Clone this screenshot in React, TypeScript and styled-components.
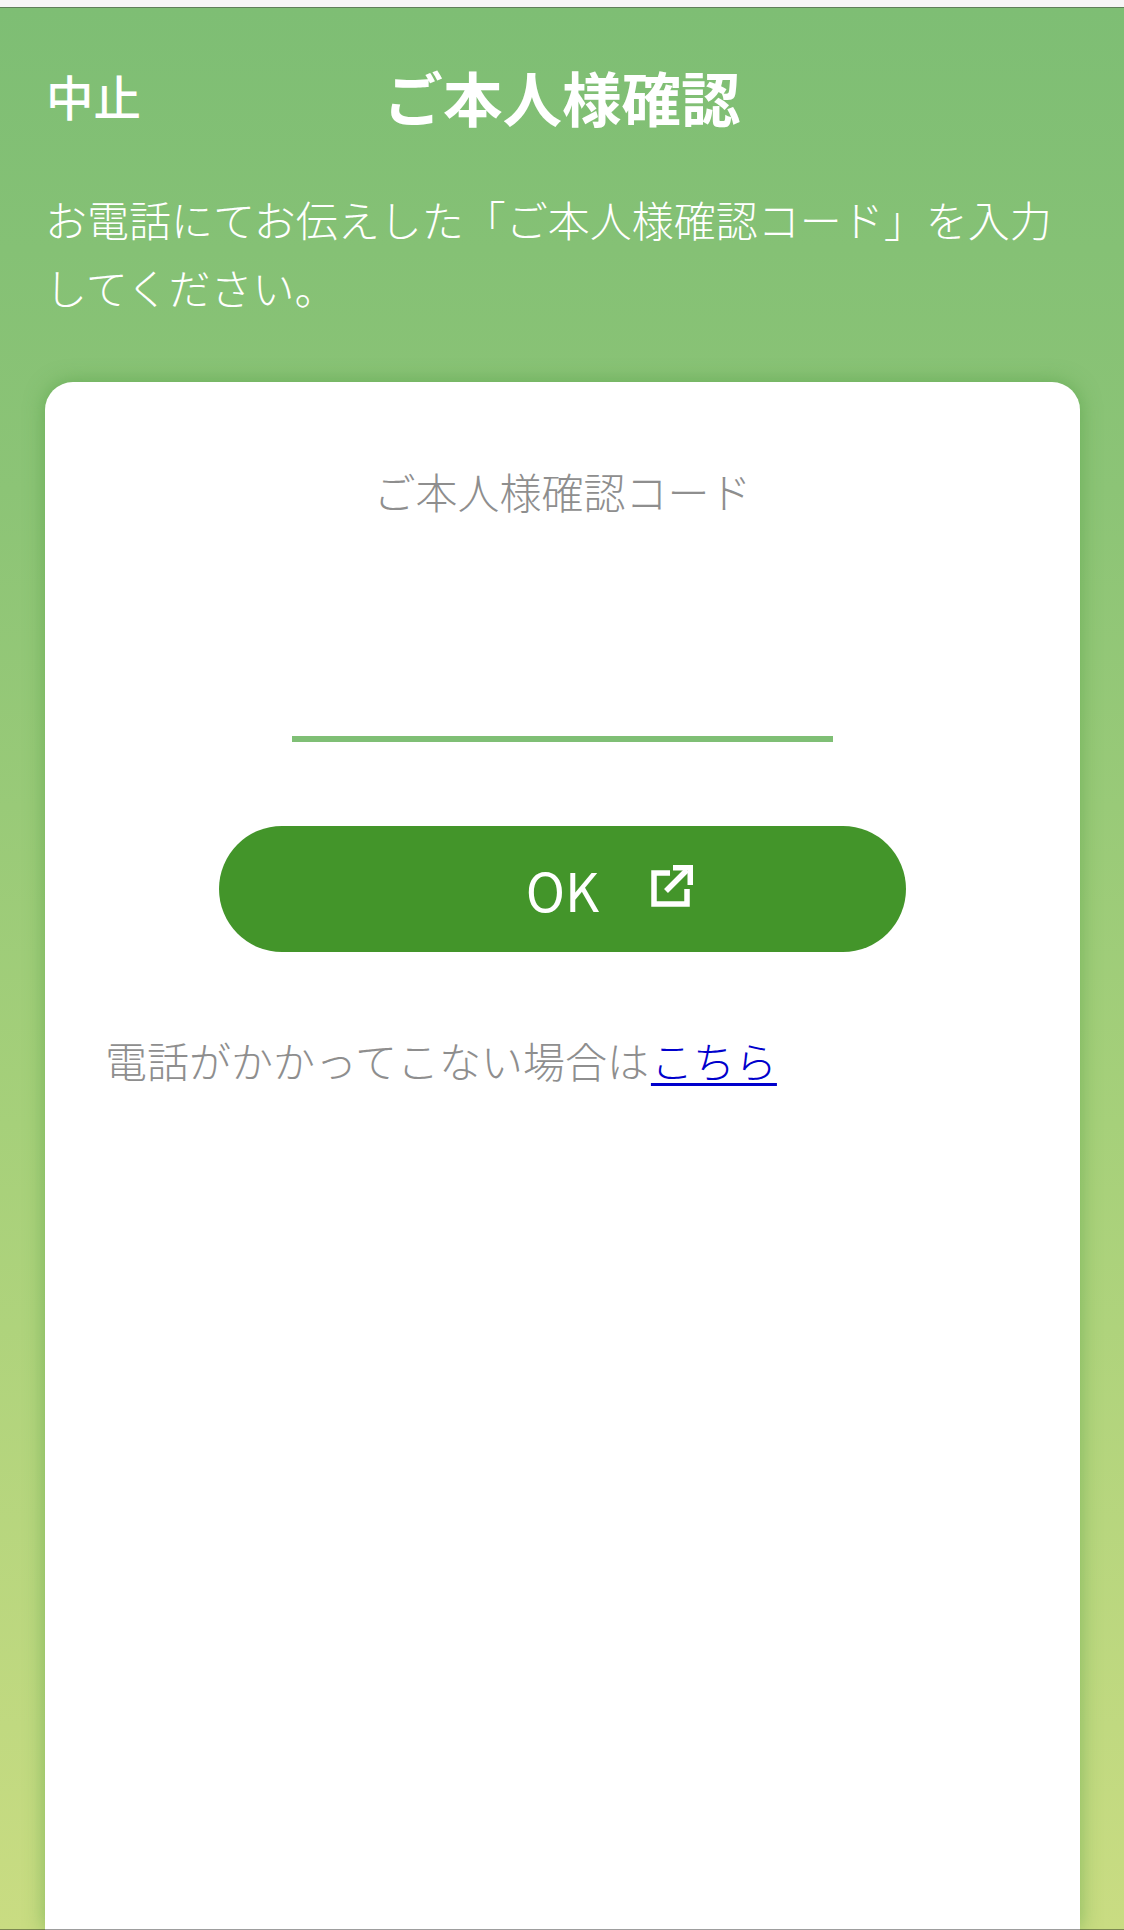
import styled, { createGlobalStyle } from "styled-components";

const GlobalStyle = createGlobalStyle`
  html, body {
    margin: 0;
    padding: 0;
    background: #ffffff;
  }
  * {
    box-sizing: border-box;
  }
`;

const Page = styled.div`
  position: relative;
  width: 1124px;
  height: 1930px;
  display: flex;
  flex-direction: column;
  overflow: hidden;
  font-family: "Noto Sans CJK JP", "Noto Sans", sans-serif;
  font-weight: 300;
`;

const TopStrip = styled.div`
  height: 8px;
  flex: none;
  background: #f6f6f6;
  border-bottom: 1px solid #5f7f5a;
`;

const BottomLine = styled.div`
  position: absolute;
  left: 0;
  right: 0;
  bottom: 0;
  height: 1px;
  background: rgba(0, 0, 0, 0.38);
`;

const Screen = styled.main`
  flex: 1;
  min-height: 0;
  display: flex;
  flex-direction: column;
  background: linear-gradient(180deg, #7ebe74 0%, #8cc476 25%, #a6d07a 58%, #c9dc82 100%);
`;

const Header = styled.header`
  display: grid;
  grid-template-columns: 1fr auto 1fr;
  align-items: center;
  height: 60px;
  margin-top: 58px;
  padding: 0 46px;
  color: #ffffff;
`;

const CancelButton = styled.span`
  font-size: 47.5px;
  font-weight: 500;
  line-height: 60px;
`;

const Title = styled.h1`
  margin: 0;
  font-size: 59.5px;
  font-weight: 700;
  line-height: 60px;
`;

const Lead = styled.p`
  margin: 59px 0 0;
  padding: 0 45px;
  color: #ffffff;
  font-size: 42px;
  line-height: 68px;
`;

const Card = styled.section`
  flex: 1;
  min-height: 0;
  margin: 61px 44px 0 45px;
  display: flex;
  flex-direction: column;
  background: #ffffff;
  border-radius: 28px 28px 0 0;
  box-shadow: 0 0 20px rgba(70, 150, 55, 0.5);
`;

const FieldLabel = styled.div`
  margin-top: 81px;
  color: #8e8e8e;
  font-size: 42px;
  line-height: 56px;
  text-align: center;
`;

const CodeInput = styled.div`
  width: 541px;
  height: 6px;
  margin: 217px auto 0;
  background: #7fbf75;
`;

const OkButton = styled.button`
  width: 687px;
  height: 126px;
  margin: 84px 0 0 174px;
  padding: 0;
  display: grid;
  grid-template-columns: 1fr auto 1fr;
  align-items: center;
  border: none;
  border-radius: 63px;
  background: #43952a;
  color: #ffffff;
  font-family: inherit;
  font-size: 53px;
  font-weight: 400;
`;

const ExternalIcon = styled.svg`
  width: 42px;
  height: 42px;
  margin-left: 52px;
  margin-top: -6px;
`;

const HelpText = styled.p`
  margin: 78px 0 0;
  padding-left: 60px;
  color: #8e8e8e;
  font-size: 42px;
  line-height: 60px;
`;

const HelpLink = styled.a`
  margin-left: 2px;
  color: #0000cc;
  text-decoration: underline;
  text-underline-offset: 5px;
  text-decoration-thickness: 3px;
`;

function App() {
  return (
    <Page>
      <GlobalStyle />
      <TopStrip />
      <Screen>
        <Header>
          <CancelButton>中止</CancelButton>
          <Title>ご本人様確認</Title>
        </Header>
        <Lead>お電話にてお伝えした「ご本人様確認コード」を入力してください。</Lead>
        <Card>
          <FieldLabel>ご本人様確認コード</FieldLabel>
          <CodeInput />
          <OkButton>
            <span />
            <span>OK</span>
            <ExternalIcon viewBox="0 0 42 42" fill="none">
              <path d="M19 8H3V39H36V24" stroke="#fff" strokeWidth="5.5" />
              <path d="M15 26L36 5" stroke="#fff" strokeWidth="5.5" />
              <path d="M22 0H42V20H36.5V5.5H22Z" fill="#fff" />
            </ExternalIcon>
          </OkButton>
          <HelpText>
            電話がかかってこない場合は<HelpLink href="#">こちら</HelpLink>
          </HelpText>
        </Card>
      </Screen>
      <BottomLine />
    </Page>
  );
}

export default App;
